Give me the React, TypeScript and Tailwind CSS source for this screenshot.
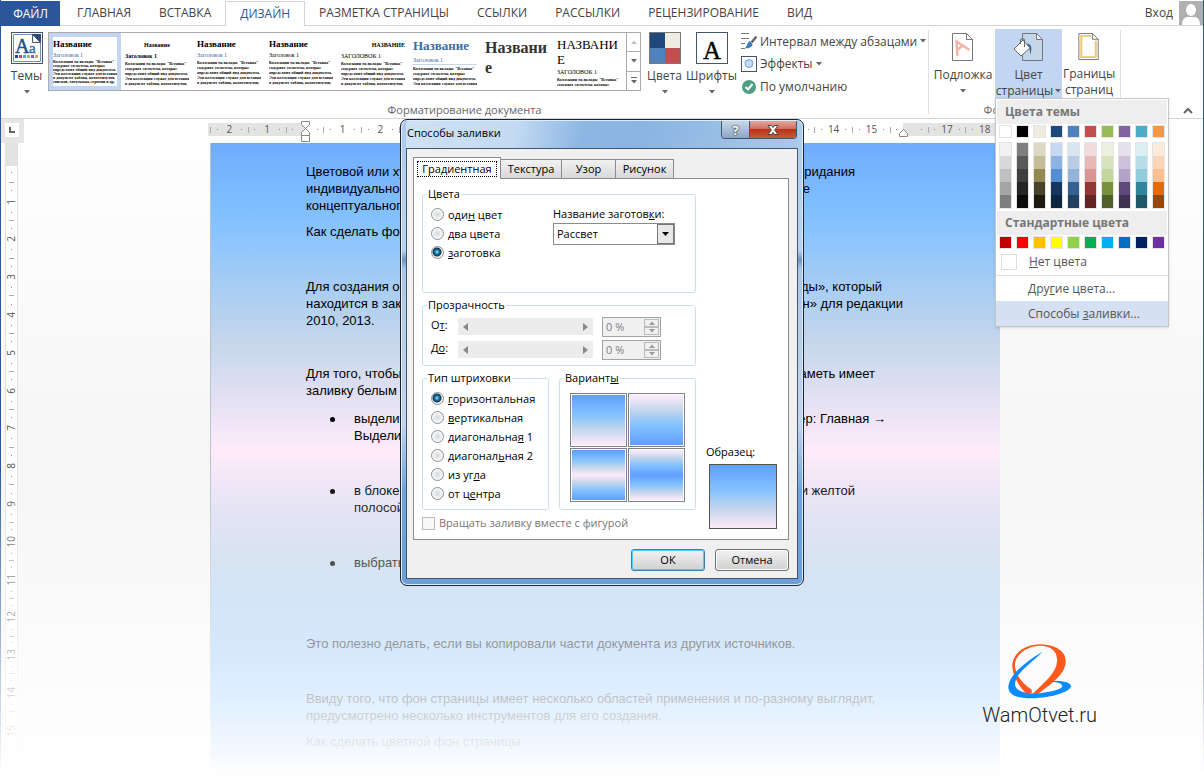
import { useState } from "react";
import type { ReactNode } from "react";

const TABS = ["ГЛАВНАЯ", "ВСТАВКА", "ДИЗАЙН", "РАЗМЕТКА СТРАНИЦЫ", "ССЫЛКИ", "РАССЫЛКИ", "РЕЦЕНЗИРОВАНИЕ", "ВИД"];

const BODY = [
    "Коллекции на вкладке \"Вставка\"",
    "содержат элементы, которые",
    "определяют общий вид документа.",
    "Эти коллекции служат для вставки",
    "в документ таблиц, колонтитулов,",
    "списков, титульных страниц и др.",
];

type StyleSet = { title: string[]; titleClass: string; heading: string; headingClass: string; lines: number; bodyClass: string };

const STYLE_SETS: StyleSet[] = [
    { title: ["Название"], titleClass: "pt-px text-[9px] leading-3 font-bold", heading: "Заголовок 1", headingClass: "text-[#3b6ba5]", lines: 6, bodyClass: "leading-[4px]" },
    { title: ["Название"], titleClass: "pt-0.5 text-center text-[6px] leading-3 font-bold", heading: "Заголовок 1", headingClass: "text-black font-bold", lines: 5, bodyClass: "leading-[5px]" },
    { title: ["Название"], titleClass: "pt-px text-[9px] leading-3 font-bold", heading: "Заголовок 1", headingClass: "text-[#3b6ba5]", lines: 5, bodyClass: "leading-[5px]" },
    { title: ["Название"], titleClass: "pt-px text-[9px] leading-3 font-bold", heading: "Заголовок 1", headingClass: "text-black", lines: 5, bodyClass: "leading-[5px]" },
    { title: ["НАЗВАНИЕ"], titleClass: "pt-0.5 text-right text-[6px] leading-3 font-bold", heading: "ЗАГОЛОВОК 1", headingClass: "text-black", lines: 5, bodyClass: "leading-[5px]" },
    { title: ["Название"], titleClass: "text-[#3b6ba5] text-[13px] leading-[18px] font-bold", heading: "Заголовок 1", headingClass: "text-[#3b6ba5] border-b border-[#c5d5ea]", lines: 4, bodyClass: "leading-[5px]" },
    { title: ["Названи", "е"], titleClass: "pt-px text-base leading-5 font-bold text-[#333]", heading: "", headingClass: "", lines: 0, bodyClass: "" },
    { title: ["НАЗВАНИ", "Е"], titleClass: "text-[13px] leading-[15px]", heading: "ЗАГОЛОВОК 1", headingClass: "text-black", lines: 2, bodyClass: "leading-[5px]" },
];

// Верхний цвет темы и пять его оттенков
const THEME_COLORS = [
    ["#ffffff", "#f2f2f2", "#d8d8d8", "#bfbfbf", "#a5a5a5", "#7f7f7f"],
    ["#000000", "#7f7f7f", "#595959", "#3f3f3f", "#262626", "#0c0c0c"],
    ["#eeece1", "#ddd9c3", "#c4bd97", "#938953", "#494429", "#1d1b10"],
    ["#1f497d", "#c6d9f0", "#8db3e2", "#548dd4", "#17365d", "#0f243e"],
    ["#4f81bd", "#dbe5f1", "#b8cce4", "#95b3d7", "#366092", "#244061"],
    ["#c0504d", "#f2dcdb", "#e5b9b7", "#d99694", "#953734", "#632423"],
    ["#9bbb59", "#ebf1dd", "#d7e3bc", "#c3d69b", "#76923c", "#4f6128"],
    ["#8064a2", "#e5e0ec", "#ccc1d9", "#b2a2c7", "#5f497a", "#3f3151"],
    ["#4bacc6", "#dbeef3", "#b7dde8", "#92cddc", "#31859b", "#205867"],
    ["#f79646", "#fdeada", "#fbd5b5", "#fac08f", "#e36c09", "#974806"],
];

const STANDARD_COLORS = ["#c00000", "#ff0000", "#ffc000", "#ffff00", "#92d050", "#00b050", "#00b0f0", "#0070c0", "#002060", "#7030a0"];

const RULER = ["2", "1", "", "1", "2", "3", "4", "5", "6", "7", "8", "9", "10", "11", "12", "13", "14", "15", "", "17", "18"];

function Arrow({ className = "" }: { className?: string }) {
    return (
        <svg viewBox="0 0 6 4" className={`h-1 w-1.5 shrink-0 ${className}`} fill="#666">
            <path d="M0 0h6L3 3.5z" />
        </svg>
    );
}

// --- Иконки ленты ---
function ThemesIcon() {
    return (
        <svg viewBox="0 0 32 32" className="size-8">
            <rect x=".5" y=".5" width="31" height="31" fill="#fff" stroke="#44546a" />
            <path d="M2.500 2.500h19l8 8v19h-27z" fill="#fff" stroke="#6f8fc0" />
            <path d="M21 2h9v9z" fill="#2b4a7e" />
            <path d="M21.500 2.500v8h8z" fill="#fff" stroke="#44546a" />
            <text x="4" y="21" fontSize="20" fontFamily="Liberation Serif, serif" fill="#1f4f8c" stroke="#1f4f8c" strokeWidth=".5">A</text>
            <text x="18" y="21" fontSize="15" fontFamily="Liberation Serif, serif" fill="#2a6db5" stroke="#2a6db5" strokeWidth=".4">a</text>
            <path d="M4 23h3v3H4z" fill="#1f497d" />
            <path d="M8 23h3v3H8z" fill="#c0504d" />
            <path d="M12 23h3v3h-3z" fill="#4bacc6" />
            <path d="M16 23h3v3h-3z" fill="#9bbb59" />
            <path d="M20 23h3v3h-3z" fill="#8064a2" />
            <path d="M24 23h3v3h-3z" fill="#f79646" />
        </svg>
    );
}

function ColorsIcon() {
    return (
        <svg viewBox="0 0 32 32" className="size-8">
            <path d="M0 0h16v16H0z" fill="#1f497d" />
            <path d="M16 0h16v16H16z" fill="#eeece1" />
            <path d="M0 16h16v16H0z" fill="#4f81bd" />
            <path d="M16 16h16v16H16z" fill="#c0504d" />
            <rect x=".5" y=".5" width="31" height="31" fill="none" stroke="#777" />
        </svg>
    );
}

function FontsIcon() {
    return (
        <svg viewBox="0 0 32 32" className="size-8">
            <rect x=".5" y=".5" width="31" height="31" fill="#fff" stroke="#44546a" />
            <text x="16" y="27" fontSize="25" textAnchor="middle" fontFamily="Liberation Serif, serif" stroke="#000" strokeWidth=".4">A</text>
        </svg>
    );
}

function SpacingIcon() {
    return (
        <svg viewBox="0 0 16 16" className="size-4 shrink-0" fill="none" stroke="#777">
            <path d="M0 .5h8M0 5.500h8M0 10.500h4M0 15.500h4" />
            <path d="M15.500 3.500L10.500 9.500" strokeWidth="2.500" stroke="#666" />
            <path d="M8.500 8l3 3c0 3-4 5-7.500 4 2-1 2-5 4.500-7z" fill="#3a7ebf" stroke="none" />
        </svg>
    );
}

function EffectsIcon() {
    return (
        <svg viewBox="0 0 16 16" className="size-4 shrink-0">
            <rect x=".5" y=".5" width="15" height="15" fill="#fff" stroke="#44546a" />
            <circle cx="8" cy="7.500" r="4" fill="#c3d9fa" stroke="#6f9fe0" />
        </svg>
    );
}

function DefaultIcon() {
    return (
        <svg viewBox="0 0 16 16" className="size-4 shrink-0">
            <circle cx="8" cy="8" r="7" fill="#4f9e83" />
            <path d="M4.500 8l2.500 2.500L11.500 5" fill="none" stroke="#fff" strokeWidth="2" />
        </svg>
    );
}

function WatermarkIcon() {
    return (
        <svg viewBox="0 0 22 29" className="h-[29px] w-[22px]">
            <path d="M.5.5h14l6 6v21H.5z" fill="#fff" stroke="#777" />
            <path d="M14.500.5v6h6" fill="none" stroke="#777" />
            <path d="M5.500 23L4.500 8.500 17.500 17M5 17l6-4.500" fill="none" stroke="#f3b5a8" strokeWidth="2.500" />
        </svg>
    );
}

function PageColorIcon() {
    return (
        <svg viewBox="0 0 30 29" className="h-[29px] w-[30px]">
            <path d="M8.500.5h14l6 6v21h-20z" fill="#c3d6ea" stroke="#777" />
            <path d="M22.500.5v6h6z" fill="#fff" stroke="#777" />
            <path d="M12 11c5-1 7 4 4 11 0-5 0-8-4-9z" fill="#2a6cb5" />
            <path d="M0 16l9-9 7 8-9 8z" fill="#fff" stroke="#666" />
            <path d="M6.500 11V6.500q2-2 4 0V14" fill="none" stroke="#666" />
        </svg>
    );
}

function BordersIcon() {
    return (
        <svg viewBox="0 0 22 29" className="h-[29px] w-[22px]">
            <path d="M.5.5h14l6 6v21H.5z" fill="#fff" stroke="#777" />
            <path d="M13 3H3v22h15V8" fill="none" stroke="#ecc66f" strokeWidth="2" />
            <path d="M14.500.5v6h6z" fill="#fff" stroke="#777" />
        </svg>
    );
}

function Swatch({ color, label }: { color: string; label: string }) {
    return <button type="button" aria-label={label} className="block size-[13px] border border-[#e2e4e7]" style={{ backgroundColor: color }} />;
}

function PageColorMenu() {
    return (
        <div className="absolute top-full left-0 z-30 w-[174px] border border-[#c6c6c6] bg-white text-left text-[#555] shadow-sm">
            <h3 className="m-px bg-[#eee] px-2 text-xs leading-6 font-bold text-[#777]">Цвета темы</h3>
            <div className="flex gap-1 px-[3px]">
                {THEME_COLORS.map((shades) => (
                    <div key={shades[0]} className="space-y-1">
                        <Swatch color={shades[0]} label={`Цвет ${shades[0]}`} />
                        <div className="flex flex-col border border-[#e2e4e7]">
                            {shades.slice(1).map((shade) => (
                                <button key={shade} type="button" aria-label={`Оттенок ${shade}`} className="h-[13px]" style={{ backgroundColor: shade }} />
                            ))}
                        </div>
                    </div>
                ))}
            </div>
            <h3 className="mx-px mt-0.5 mb-px bg-[#eee] px-2 text-xs leading-6 font-bold text-[#777]">Стандартные цвета</h3>
            <div className="flex gap-1 px-[3px]">
                {STANDARD_COLORS.map((color) => <Swatch key={color} color={color} label={`Цвет ${color}`} />)}
            </div>
            <button type="button" className="flex h-[27px] w-full items-center gap-3 border-b border-[#ddd] px-[5px] text-xs">
                <span className="size-4 border border-[#ddd] bg-white" />
                <span><u>Н</u>ет цвета</span>
            </button>
            <button type="button" className="block w-full pl-8 text-left text-xs leading-[25px]">Дру<u>г</u>ие цвета...</button>
            <button type="button" className="block w-full bg-[#d5e1f2] pl-8 text-left text-xs leading-[25px]">Способы <u>з</u>аливки...</button>
        </div>
    );
}

function StyleCard({ item, selected }: { item: StyleSet; selected: boolean }) {
    return (
        <button
            type="button"
            className={`h-[57px] w-[72px] shrink-0 overflow-hidden border-4 text-left align-top font-["Liberation_Serif",serif] text-black ${selected ? "border-[#c2d5f2]" : "border-transparent"}`}
        >
            <span className="flex h-full flex-col">
                <span className={`block ${item.titleClass}`}>
                    {item.title.map((part) => <span key={part} className="block">{part}</span>)}
                </span>
                {item.heading && <span className={`mt-0.5 mb-px block text-[6px] leading-[7px] ${item.headingClass}`}>{item.heading}</span>}
                {BODY.slice(0, item.lines).map((line) => (
                    <span key={line} className={`block text-[4px] font-bold whitespace-nowrap ${item.bodyClass}`}>{line}</span>
                ))}
            </span>
        </button>
    );
}

function Ribbon() {
    return (
        <div className="flex h-[93px] border-b border-[#d4d4d4] text-[#444]">
            <div className="flex">
                <div className="flex flex-col">
                    <div className="flex pt-1.5">
                        <button type="button" className="flex w-[47px] flex-col items-center pl-1">
                            <ThemesIcon />
                            <span className="mt-0.5 text-xs leading-5">Темы</span>
                            <Arrow className="mt-1" />
                        </button>
                        <div className="flex h-[59px] w-[593px] border border-[#ababab]">
                            <div className="flex flex-1 overflow-hidden">
                                {STYLE_SETS.map((item, index) => <StyleCard key={index} item={item} selected={index === 0} />)}
                            </div>
                            <div className="flex w-3.5 flex-col divide-y divide-[#ababab] border-l border-[#ababab]">
                                <button type="button" aria-label="Вверх" className="flex flex-1 items-center justify-center"><Arrow className="rotate-180 opacity-40" /></button>
                                <button type="button" aria-label="Вниз" className="flex flex-1 items-center justify-center"><Arrow /></button>
                                <button type="button" aria-label="Дополнительно" className="flex flex-1 flex-col items-center justify-center gap-0.5">
                                    <span className="h-px w-1.5 bg-[#666]" />
                                    <Arrow />
                                </button>
                            </div>
                        </div>
                        <button type="button" className="flex w-[47px] flex-col items-center">
                            <ColorsIcon />
                            <span className="mt-0.5 text-xs leading-5">Цвета</span>
                            <Arrow className="mt-1" />
                        </button>
                        <button type="button" className="flex w-[47px] flex-col items-center">
                            <FontsIcon />
                            <span className="mt-0.5 text-xs leading-5">Шрифты</span>
                            <Arrow className="mt-1" />
                        </button>
                        <div className="flex w-[193px] flex-col pl-1.5 text-xs leading-[23px] whitespace-nowrap">
                            <button type="button" className="flex h-[18px] items-center gap-[3px]"><SpacingIcon />Интервал между абзацами<Arrow /></button>
                            <button type="button" className="mt-0.5 flex h-[23px] items-center gap-[3px]"><EffectsIcon />Эффекты<Arrow /></button>
                            <button type="button" className="flex h-[23px] items-center gap-[3px]"><DefaultIcon />По умолчанию</button>
                        </div>
                    </div>
                    <p className="mt-auto pb-0.5 text-center text-[11px] leading-3 text-[#666]">Форматирование документа</p>
                </div>
                <div className="my-1 w-px bg-[#e1e1e1]" />
                <div className="flex flex-col">
                    <div className="flex h-[72px] pt-[3px]">
                        <button type="button" className="flex w-[66px] flex-col items-center pt-1 pl-0.5">
                            <WatermarkIcon />
                            <span className="mt-[5px] text-xs leading-4">Подложка</span>
                            <Arrow className="mt-1.5" />
                        </button>
                        <div className="relative h-[69px] bg-[#c2d5f2]">
                            <button type="button" className="flex w-[67px] flex-col items-center pt-1" aria-expanded="true">
                                <PageColorIcon />
                                <span className="mt-[5px] text-xs leading-4">Цвет</span>
                                <span className="flex items-center gap-0.5 text-xs leading-4">страницы<Arrow /></span>
                            </button>
                            <PageColorMenu />
                        </div>
                        <button type="button" className="flex w-[54px] flex-col items-center pt-1">
                            <BordersIcon />
                            <span className="mt-[5px] text-xs leading-4">Границы страниц</span>
                        </button>
                    </div>
                    <p className="mt-auto pb-0.5 text-center text-[11px] leading-3 text-[#666]">Фон страницы</p>
                </div>
                <div className="my-1 ml-1 w-px bg-[#e1e1e1]" />
            </div>
            <button type="button" aria-label="Свернуть ленту" className="mt-auto ml-auto p-2.5 pb-1">
                <svg viewBox="0 0 10 7" className="h-[7px] w-2.5" fill="none" stroke="#666" strokeWidth="2"><path d="M1 6l4-4 4 4" /></svg>
            </button>
        </div>
    );
}

function HorizontalRuler() {
    return (
        <div className="relative flex h-[13px] w-[795px] bg-[linear-gradient(90deg,#e3e3e3_97px,#fff_97px,#fff_695px,#e3e3e3_695px)] pl-0.5 text-[10px] leading-[13px] text-[#555]">
            {RULER.map((mark, index) => (
                <div key={index} className="flex flex-1 items-center justify-between">
                    <span className="h-1.5 w-px bg-[#aaa]" />
                    <span className="size-px bg-[#888]" />
                    <span className="w-3 text-center">{mark}</span>
                    <span className="size-px bg-[#888]" />
                    <span />
                </div>
            ))}
            <svg viewBox="0 0 10 22" className="absolute -top-0.5 left-[93px] h-[22px] w-2.5" fill="#fff" stroke="#888">
                <path d="M.5.5h8v3l-4 4 4 4v3h-8v-3l4-4-4-4zM.5 14.500h8v6h-8z" />
            </svg>
            <svg viewBox="0 0 10 8" className="absolute top-1.5 left-[691px] h-2 w-2.5" fill="#fff" stroke="#888">
                <path d="M.5 7.500v-3l4-4 4 4v3z" />
            </svg>
        </div>
    );
}

function VerticalRuler() {
    return (
        <div className="w-[13px] border-x border-[#e1e1e1] bg-white text-[10px] text-[#555]">
            <div className="h-[23px] bg-[#e3e3e3]" />
            <div className="h-4 pt-1.5"><span className="mx-auto block size-px bg-[#888]" /></div>
            <div className="flex h-[567px] flex-col">
                {Array.from({ length: 15 }, (_, index) => (
                    <div key={index} className="flex flex-1 flex-col items-center justify-between">
                        <span className="h-px w-[5px] bg-[#aaa]" />
                        <span className="size-px bg-[#888]" />
                        <span className="rotate-180 leading-[11px] [writing-mode:vertical-rl]">{index + 1}</span>
                        <span className="size-px bg-[#888]" />
                        <span />
                    </div>
                ))}
            </div>
        </div>
    );
}

// Строка документа, середина которой закрыта окном
function Line({ start, end = "", width = "" }: { start: string; end?: string; width?: string }) {
    return (
        <span className={`flex justify-between whitespace-nowrap ${width}`}>
            <span>{start}</span>
            <span>{end}</span>
        </span>
    );
}

function Item({ children }: { children: ReactNode }) {
    return (
        <li className="flex">
            <span className="flex w-6 shrink-0 pt-[7px]"><span className="size-[5px] rounded-full bg-black" /></span>
            <div>{children}</div>
        </li>
    );
}

function DocumentPage() {
    return (
        <article className="w-[790px] flex-1 border-l border-[#b9c3cf] bg-[linear-gradient(180deg,#70acff_0,#85c2ff_80px,#c4d6eb_197px,#ffebfa_309px,#c4d6eb_421px,#85c2ff_550px,#70acff_633px)] pt-5 pl-[95px] font-['Liberation_Sans',Arial,sans-serif] text-[13px] leading-[17px] text-black">
            <p>
                <Line start="Цветовой или художественный" end="придания" width="w-[549px]" />
                <Line start="индивидуальности" end="более" width="w-[504px]" />
                <Line start="концептуального вида" />
            </p>
            <p className="mt-[9px]"><Line start="Как сделать фон страницы" /></p>
            <p className="mt-[38px]">
                <Line start="Для создания основы" end="команды», который" width="w-[576px]" />
                <Line start="находится в закладке" end="«Дизайн» для редакции" width="w-[597px]" />
                <Line start="2010, 2013." />
            </p>
            <p className="mt-[36px]">
                <Line start="Для того, чтобы убрать" end="заметь имеет" width="w-[569px]" />
                <Line start="заливку белым цветом" />
            </p>
            <ul className="mt-[11px] space-y-[38px] pl-6">
                <Item>
                    <Line start="выделить текст" end="Например: Главная →" width="w-[532px]" />
                    <Line start="Выделить" />
                </Item>
                <Item>
                    <Line start="в блоке абзац" end="ручкой и желтой" width="w-[501px]" />
                    <Line start="полосой" />
                </Item>
                <Item><Line start="выбрать «Нет»" /></Item>
            </ul>
            <p className="mt-16">Это полезно делать, если вы копировали части документа из других источников.</p>
            <p className="mt-[38px]">
                Ввиду того, что фон страницы имеет несколько областей применения и по-разному выглядит,<br />
                предусмотрено несколько инструментов для его создания.
            </p>
            <p className="mt-[9px]">Как сделать цветной фон страницы</p>
        </article>
    );
}

type RadioProps = { name: string; value: string; current: string; onPick: (value: string) => void; children: ReactNode };

function Radio({ name, value, current, onPick, children }: RadioProps) {
    return (
        <label className="flex h-[19px] items-center gap-1">
            <input
                type="radio"
                name={name}
                checked={current === value}
                onChange={() => onPick(value)}
                className="size-[13px] appearance-none rounded-full border border-[#8e8f8f] bg-[radial-gradient(circle,#d4d7da_0,#e8eaec_3px,#fff_6px)] checked:bg-[radial-gradient(circle_at_5px_5px,#9eeaff_0,#1b7fb5_2px,#0b3350_4px,#f4f4f4_5px)]"
            />
            <span>{children}</span>
        </label>
    );
}

function TransparencyRow({ id, label }: { id: string; label: ReactNode }) {
    return (
        <div className="flex h-[23px] items-start">
            <label htmlFor={id} className="w-[27px] leading-4">{label}</label>
            <div className="mt-px flex h-[17px] w-[135px] items-center justify-between bg-[#ececec] px-[5px]">
                <svg viewBox="0 0 5 8" className="h-2 w-[5px]" fill="#888"><path d="M5 0v8L0 4z" /></svg>
                <svg viewBox="0 0 5 8" className="h-2 w-[5px]" fill="#888"><path d="M0 0v8l5-4z" /></svg>
            </div>
            <div className="ml-[9px] flex h-5 w-[59px] border border-[#a3a3a3] bg-[#f0f0f0] p-px">
                <input id={id} disabled defaultValue="0 %" className="w-10 flex-1 pl-0.5 text-[11px] text-[#808080]" />
                <div className="flex w-[15px] flex-col">
                    <button type="button" disabled aria-label="Больше" className="flex h-2 items-center justify-center border border-[#bbb]"><Arrow className="rotate-180 opacity-60" /></button>
                    <button type="button" disabled aria-label="Меньше" className="flex h-2 items-center justify-center border border-[#bbb]"><Arrow className="opacity-60" /></button>
                </div>
            </div>
        </div>
    );
}

const VARIANT_CLASSES = [
    "bg-[linear-gradient(180deg,#5e9eff,#85c2ff_40%,#c4d6eb_70%,#ffebfa)]",
    "bg-[linear-gradient(0deg,#5e9eff,#85c2ff_40%,#c4d6eb_70%,#ffebfa)]",
    "bg-[linear-gradient(180deg,#5e9eff,#85c2ff_20%,#c4d6eb_35%,#ffebfa_50%,#c4d6eb_65%,#85c2ff_80%,#5e9eff)]",
    "bg-[linear-gradient(180deg,#ffebfa,#c4d6eb_15%,#85c2ff_30%,#5e9eff_50%,#85c2ff_70%,#c4d6eb_85%,#ffebfa)]",
];

const GROUP = "min-w-0 rounded-[3px] border border-[#d0dde8] pl-2";

function FillEffectsDialog() {
    const [mode, setMode] = useState("preset");
    const [shading, setShading] = useState("horizontal");

    return (
        <section
            role="dialog"
            aria-label="Способы заливки"
            className="w-[404px] rounded-[7px] border border-[#1b2431] bg-[linear-gradient(180deg,#aecbeb_0,#b9d3ee_28%,#6f95c4_30%,#a9c4e4_32%,#b4cbe6_40%,#c3d5ec_65%,#6fa3db_80%,#6a9fd8)] px-[5px] pt-px pb-1.5 text-[11px] leading-4 text-black shadow-[inset_0_0_0_1px_#dcecfa]"
        >
            <header className="flex h-[27px] items-start justify-between rounded-t bg-[linear-gradient(100deg,#cfe1f4_0,#c3daf2_28%,#8db6e3_45%,#8ab4e2_60%,#a9c9eb)] pr-px">
                <h2 className="pt-1 pl-px text-[11px] leading-4">Способы заливки</h2>
                <div className="flex h-[18px] overflow-hidden rounded-b border border-t-0 border-[#3f5673]">
                    <button type="button" aria-label="Справка" className="w-7 border-r border-[#3f5673] bg-linear-to-b from-[#c9d8e8] to-[#8ba6c4] text-[13px] leading-4 font-bold text-white [text-shadow:0_0_2px_#222,0_0_1px_#222]">?</button>
                    <button type="button" aria-label="Закрыть" className="flex w-[46px] items-center justify-center bg-[linear-gradient(180deg,#e3a79b_0,#d0705f_45%,#b8321c_50%,#c95a3c)]">
                        <svg viewBox="0 0 12 10" className="h-2.5 w-3" fill="#fff" stroke="#444"><path d="M1 .5h3.500L6 2.500 7.500.5H11L7.700 5 11 9.500H7.500L6 7.500 4.500 9.500H1L4.300 5z" /></svg>
                    </button>
                </div>
            </header>
            <div className="border border-[#44566c] bg-[#f0f0f0] pt-2 pr-2 pb-[7px] pl-1.5">
                <div role="tablist" className="flex items-end">
                    <button type="button" role="tab" aria-selected="true" className="z-10 -mb-px flex h-[22px] w-[88px] items-center justify-center border border-b-0 border-[#898c95] bg-white">
                        <span className="border border-dotted border-black px-1 leading-3.5">Градиентная</span>
                    </button>
                    <button type="button" role="tab" aria-selected="false" className="h-[19px] w-[61px] border border-b-0 border-l-0 border-[#898c95] bg-linear-to-b from-[#f2f2f2] to-[#d8d8d8]">Текстура</button>
                    <button type="button" role="tab" aria-selected="false" className="h-[19px] w-[54px] border border-b-0 border-l-0 border-[#898c95] bg-linear-to-b from-[#f2f2f2] to-[#d8d8d8]">Узор</button>
                    <button type="button" role="tab" aria-selected="false" className="h-[19px] w-[58px] border border-b-0 border-l-0 border-[#898c95] bg-linear-to-b from-[#f2f2f2] to-[#d8d8d8]">Рисунок</button>
                </div>
                <div role="tabpanel" className="flex gap-2.5 border border-[#898c95] bg-white px-2 pt-[7px] pb-2">
                    <div className="w-[274px]">
                        <fieldset className={`${GROUP} flex h-[107px]`}>
                            <legend className="-ml-1 px-px">Цвета</legend>
                            <div className="w-[122px] pt-[3px]">
                                <Radio name="mode" value="one" current={mode} onPick={setMode}>оди<u>н</u> цвет</Radio>
                                <Radio name="mode" value="two" current={mode} onPick={setMode}><u>д</u>ва цвета</Radio>
                                <Radio name="mode" value="preset" current={mode} onPick={setMode}><u>з</u>аготовка</Radio>
                            </div>
                            <div className="pt-[3px]">
                                <label htmlFor="preset" className="block leading-[17px]">Название заготов<u>к</u>и:</label>
                                <div className="relative mt-px">
                                    <select id="preset" className="h-[22px] w-[122px] appearance-none border border-[#8a8a8a] bg-white pl-[3px] text-[11px]">
                                        <option>Рассвет</option>
                                    </select>
                                    <span className="pointer-events-none absolute top-px right-px flex h-5 w-[17px] items-center justify-center border border-[#777] bg-[#e8e8e8]">
                                        <svg viewBox="0 0 7 4" className="h-1 w-[7px]"><path d="M0 0h7L3.500 4z" /></svg>
                                    </span>
                                </div>
                            </div>
                        </fieldset>
                        <fieldset className={`${GROUP} mt-1 h-[69px]`}>
                            <legend className="-ml-1 px-px">Прозрачность</legend>
                            <div className="pt-1">
                                <TransparencyRow id="from" label={<>О<u>т</u>:</>} />
                                <TransparencyRow id="to" label={<>Д<u>о</u>:</>} />
                            </div>
                        </fieldset>
                        <div className="mt-1 flex justify-between">
                            <fieldset className={`${GROUP} h-[140px] w-[127px]`}>
                                <legend className="-ml-1 px-px">Тип штриховки</legend>
                                <div className="pt-[3px]">
                                    <Radio name="shading" value="horizontal" current={shading} onPick={setShading}><u>г</u>оризонтальная</Radio>
                                    <Radio name="shading" value="vertical" current={shading} onPick={setShading}><u>в</u>ертикальная</Radio>
                                    <Radio name="shading" value="diagonal1" current={shading} onPick={setShading}>диагональна<u>я</u> 1</Radio>
                                    <Radio name="shading" value="diagonal2" current={shading} onPick={setShading}>диагонал<u>ь</u>ная 2</Radio>
                                    <Radio name="shading" value="corner" current={shading} onPick={setShading}>из уг<u>л</u>а</Radio>
                                    <Radio name="shading" value="center" current={shading} onPick={setShading}>от ц<u>е</u>нтра</Radio>
                                </div>
                            </fieldset>
                            <fieldset className={`${GROUP} h-[140px] w-[137px]`}>
                                <legend className="-ml-1 px-px">Вариант<u>ы</u></legend>
                                <div className="mt-[7px] ml-0.5 grid w-[115px] grid-cols-2 gap-px">
                                    {VARIANT_CLASSES.map((fill, index) => (
                                        <button key={fill} type="button" aria-label={`Вариант ${index + 1}`} className="h-[54px] border border-[#7d828a] bg-white p-px">
                                            <span className={`block h-full ${fill}`} />
                                        </button>
                                    ))}
                                </div>
                            </fieldset>
                        </div>
                        <label className="mt-[5px] flex items-center gap-1 text-[#777]">
                            <input type="checkbox" disabled className="size-[13px] appearance-none border border-[#bbb] bg-[#f8f8f8]" />
                            Вращать заливку вместе с фигурой
                        </label>
                    </div>
                    <div className="mt-auto pb-0.5">
                        <p>Образец:</p>
                        <div className="mt-1 ml-[3px] h-[65px] w-[68px] border border-[#555] bg-[linear-gradient(180deg,#5e9eff,#85c2ff_40%,#c4d6eb_70%,#ffebfa)]" />
                    </div>
                </div>
                <div className="mt-[9px] flex justify-end gap-2.5">
                    <button type="button" className="h-[22px] w-[74px] rounded-[3px] border border-[#3c7fb1] bg-linear-to-b from-[#f2f2f2] to-[#d0d0d0] shadow-[inset_0_0_0_1px_#48d0f5]">ОК</button>
                    <button type="button" className="h-[22px] w-[74px] rounded-[3px] border border-[#707070] bg-linear-to-b from-[#f2f2f2] to-[#d0d0d0] shadow-[inset_0_0_0_1px_#fafafa]">Отмена</button>
                </div>
            </div>
        </section>
    );
}

function SiteLogo() {
    return (
        <a href="#" className="absolute right-[107px] bottom-[49px] z-20 flex flex-col items-center font-[Roboto,sans-serif] text-xl leading-6 font-light text-[#222]">
            <svg viewBox="110 40 196 172" className="mb-[3px] h-[57px] w-[65px]">
                <path d="M185 190C176 196 164 192 158 182C140 160 124 130 126 104C131 65 170 44 210 44C260 45 290 68 287 98C284 140 235 168 197 199L187 194C225 155 258 132 261 95C262 65 245 49 208 48C170 50 137 73 134 104C133 130 152 160 184 180Z" fill="#ff5a1e" />
                <path d="M218 66C180 105 135 130 134 165C136 189 180 196 220 190C250 185 276 180 277 169C275 161 258 157 236 156C270 152 303 158 303 170C303 186 250 206 182 207C145 207 114 199 114 172C116 137 165 98 218 66Z" fill="#0a8cff" />
            </svg>
            WamOtvet.ru
        </a>
    );
}

export default function App() {
    return (
        <div className='relative flex min-h-screen flex-col overflow-hidden bg-white font-["Open_Sans","Noto_Sans",sans-serif]'>
            <div className="flex flex-1 flex-col border-x border-[#2b579a]">
                <nav className="flex h-[26px] pt-px text-xs text-[#444]">
                    <button type="button" className="w-[59px] bg-[#2b579a] text-white">ФАЙЛ</button>
                    <div className="flex flex-1 border-b border-[#d4d4d4] pl-[3px]">
                        {TABS.map((tab) => (
                            <button
                                key={tab}
                                type="button"
                                className={tab === "ДИЗАЙН" ? "-mb-px border border-b-0 border-[#d4d4d4] bg-white px-3.5 text-[#2b579a]" : "px-3.5"}
                            >
                                {tab}
                            </button>
                        ))}
                        <button type="button" className="ml-auto px-1.5">Вход</button>
                        <svg viewBox="0 0 24 24" className="size-6">
                            <path d="M0 0h24v24H0z" fill="#b0b0b0" />
                            <ellipse cx="12" cy="9" rx="5" ry="6" fill="#fff" />
                            <path d="M3 24c0-6 3-8 6-8h6c3 0 6 2 6 8z" fill="#fff" />
                        </svg>
                    </div>
                </nav>
                <Ribbon />
                <main className="flex flex-1 flex-col bg-[linear-gradient(180deg,#fff,#f6f6f6_330px,#f6f6f6)]">
                    <div className="flex h-6">
                        <div className="flex w-[23px] shrink-0 items-start bg-[#e6e6e6] p-1">
                            <button type="button" aria-label="Табуляция" className="flex size-[14px] items-center justify-center bg-white">
                                <span className="size-1.5 border-b-2 border-l-2 border-[#666]" />
                            </button>
                        </div>
                        <div className="flex flex-1 justify-center pt-1 pr-4"><HorizontalRuler /></div>
                    </div>
                    <div className="flex flex-1">
                        <div className="w-[23px] shrink-0 pl-1"><VerticalRuler /></div>
                        <div className="flex flex-1 items-stretch justify-center pr-[17px]"><div className="flex flex-col"><DocumentPage /></div></div>
                    </div>
                </main>
            </div>
            <div className="pointer-events-none absolute inset-x-0 bottom-0 z-10 h-[311px] bg-linear-to-b from-white/0 to-white" />
            <div className="pointer-events-none absolute inset-x-0 top-[119px] z-20 flex justify-center">
                <div className="pointer-events-auto"><FillEffectsDialog /></div>
            </div>
            <SiteLogo />
        </div>
    );
}
